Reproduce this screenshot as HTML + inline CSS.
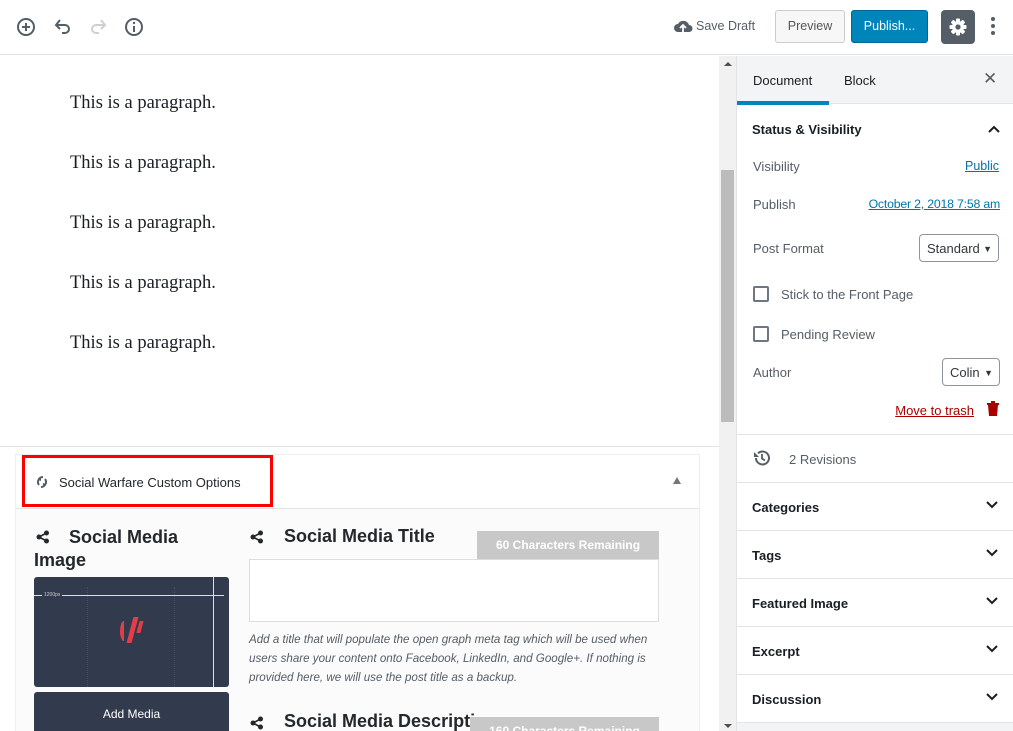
<!DOCTYPE html>
<html style="overflow:hidden;width:1013px;height:731px"><head><meta charset="utf-8"><style>
*{box-sizing:border-box;margin:0;padding:0}
body{width:1013px;height:731px;overflow:hidden;background:#fff;font-family:"Liberation Sans",sans-serif;color:#191e23;position:relative;font-size:13px}
.a{position:absolute}
.p{font-family:"Liberation Serif",serif;font-size:18.5px;color:#191e23;left:70px}
.sb{left:737px;width:276px}
.row{position:absolute;left:737px;width:276px;border-top:1px solid #e2e4e7;height:48px;font-size:13px;font-weight:bold;padding:17px 15px}
.chev{position:absolute;right:14px;top:17px}
.lbl{color:#555d66;font-size:13px}
a{color:#0073aa;text-decoration:underline}
.sel{position:absolute;border:1px solid #8d96a0;border-radius:4px;height:28px;font-size:13px;color:#32373c;padding:6px 7px}
.cb{position:absolute;width:16px;height:16px;border:2px solid #6c7781;border-radius:2px;left:753px}
</style></head><body>
<div class="a" style="left:0;top:0;width:1013px;height:55px;border-bottom:1px solid #e2e4e7"></div>
<svg class="a" style="left:16px;top:17px" width="20" height="20" viewBox="0 0 20 20"><circle cx="10" cy="10" r="8" fill="none" stroke="#555d66" stroke-width="2"/><path d="M10 6v8M6 10h8" stroke="#555d66" stroke-width="2"/></svg>
<svg class="a" style="left:53px;top:17px" width="20" height="20" viewBox="0 0 20 20"><path d="M4 8h8a4 4 0 0 1 0 8H9" fill="none" stroke="#555d66" stroke-width="2"/><path d="M7 3L3 8l4 4" fill="none" stroke="#555d66" stroke-width="2"/></svg>
<svg class="a" style="left:88px;top:17px" width="20" height="20" viewBox="0 0 20 20"><path d="M16 8H8a4 4 0 0 0 0 8h3" fill="none" stroke="#ccd0d4" stroke-width="2"/><path d="M13 3l4 5-4 4" fill="none" stroke="#ccd0d4" stroke-width="2"/></svg>
<svg class="a" style="left:124px;top:17px" width="20" height="20" viewBox="0 0 20 20"><circle cx="10" cy="10" r="8" fill="none" stroke="#555d66" stroke-width="2"/><path d="M10 9v6" stroke="#555d66" stroke-width="2"/><circle cx="10" cy="6" r="1.2" fill="#555d66"/></svg>
<svg class="a" style="left:673px;top:18px" width="20" height="16" viewBox="0 0 20 16"><path d="M5 14a4 4 0 0 1 0-8 6 6 0 0 1 11 1 3.5 3.5 0 0 1 0 7z" fill="#555d66"/><path d="M10 14V8M7 10l3-3 3 3" stroke="#fff" stroke-width="1.8" fill="none"/></svg>
<div class="a" style="left:696px;top:19px;color:#555d66;font-size:12.5px">Save Draft</div>
<div class="a" style="left:775px;top:10px;width:70px;height:33px;border:1px solid #ccc;border-radius:3px;background:#f7f7f7;color:#555;font-size:12.5px;text-align:center;line-height:31px">Preview</div>
<div class="a" style="left:851px;top:10px;width:77px;height:33px;border:1px solid #006799;border-radius:3px;background:#0085ba;color:#fff;font-size:12.5px;text-align:center;line-height:31px">Publish...</div>
<div class="a" style="left:941px;top:10px;width:34px;height:34px;border-radius:4px;background:#555d66"></div>
<svg class="a" style="left:948px;top:17px" width="20" height="20" viewBox="0 0 20 20"><g fill="#fff"><circle cx="10" cy="10" r="6"/><rect x="8" y="1.5" width="4" height="17" rx="1"/><rect x="8" y="1.5" width="4" height="17" rx="1" transform="rotate(45 10 10)"/><rect x="8" y="1.5" width="4" height="17" rx="1" transform="rotate(90 10 10)"/><rect x="8" y="1.5" width="4" height="17" rx="1" transform="rotate(135 10 10)"/></g><circle cx="10" cy="10" r="2.6" fill="#555d66"/></svg>
<div class="a" style="left:991px;top:17px;width:4px;height:4px;border-radius:2px;background:#555d66;box-shadow:0 7px 0 #555d66,0 14px 0 #555d66"></div>

<div class="a p" style="top:93px">This is a paragraph.</div>
<div class="a p" style="top:153px">This is a paragraph.</div>
<div class="a p" style="top:213px">This is a paragraph.</div>
<div class="a p" style="top:273px">This is a paragraph.</div>
<div class="a p" style="top:333px">This is a paragraph.</div>

<div class="a" style="left:719px;top:56px;width:18px;height:675px;background:#f1f1f1"></div>
<div class="a" style="left:721px;top:170px;width:13px;height:252px;background:#bcbcbc"></div>
<div class="a" style="left:724px;top:62px;border:4px solid transparent;border-bottom:4px solid #505050;border-top:0"></div>
<div class="a" style="left:724px;top:724px;border:4px solid transparent;border-top:4px solid #505050;border-bottom:0"></div>

<div class="a" style="left:0;top:446px;width:719px;height:285px;border-top:1px solid #e2e4e7;overflow:hidden">
<div class="a" style="left:15px;top:7px;width:685px;height:300px;background:#fbfbfb;border:1px solid #eee"></div>
<div class="a" style="left:16px;top:8px;width:683px;height:54px;background:#fff;border-bottom:1px solid #e2e4e7"></div>
<div class="a" style="left:22px;top:8px;width:251px;height:52px;border:3px solid #f00"></div>
<svg class="a" style="left:35px;top:28px" width="14" height="14" viewBox="0 0 14 14"><path d="M8 2A5 5 0 0 0 4 10M6 12a5 5 0 0 0 4-8" fill="none" stroke="#555d66" stroke-width="2"/><path d="M3 5l3-3v4zM11 9l-3 3V8z" fill="#555d66"/></svg>
<div class="a" style="left:59px;top:28px;font-size:13px;color:#23282d">Social Warfare Custom Options</div>
<div class="a" style="left:673px;top:30px;border:4px solid transparent;border-bottom:7px solid #72777c;border-top:0"></div>

<svg class="a" style="left:36px;top:83px" width="14" height="14" viewBox="0 0 14 14"><g fill="#23282d"><circle cx="10.5" cy="3" r="2.5"/><circle cx="3" cy="7" r="2.5"/><circle cx="10.5" cy="11" r="2.5"/></g><path d="M10.5 3L3 7l7.5 4" stroke="#23282d" stroke-width="1.6" fill="none"/></svg>
<div class="a" style="left:34px;top:79px;width:190px;font-size:18px;font-weight:bold;color:#23282d;line-height:23px;text-indent:35px">Social Media Image</div>
<div class="a" style="left:34px;top:130px;width:195px;height:110px;background:#323a4e;border-radius:3px;overflow:hidden">
 <div class="a" style="left:0;top:18px;width:190px;height:1px;background:#ddd"></div>
 <div class="a" style="left:179px;top:0;width:1px;height:110px;background:#ddd"></div>
 <div class="a" style="left:53px;top:10px;width:88px;height:100px;border-left:1px dotted #454d60;border-right:1px dotted #454d60"></div>
 <div class="a" style="left:8px;top:15px;font-size:5px;color:#ccc;background:#323a4e;padding:0 2px">1200px</div>
 <div class="a" style="left:86px;top:44px;width:8px;height:20px;border-left:4px solid #e33d47;border-radius:50% 0 0 50%"></div>
 <div class="a" style="left:96px;top:40px;width:5px;height:26px;background:#e33d47;transform:skewX(-15deg)"></div>
 <div class="a" style="left:104px;top:44px;width:4px;height:12px;background:#e33d47;transform:skewX(-15deg)"></div>
</div>
<div class="a" style="left:34px;top:245px;width:195px;height:45px;background:#323a4e;border-radius:3px;color:#fff;font-size:12px;text-align:center;padding-top:15px">Add Media</div>

<svg class="a" style="left:250px;top:83px" width="14" height="14" viewBox="0 0 14 14"><g fill="#23282d"><circle cx="10.5" cy="3" r="2.5"/><circle cx="3" cy="7" r="2.5"/><circle cx="10.5" cy="11" r="2.5"/></g><path d="M10.5 3L3 7l7.5 4" stroke="#23282d" stroke-width="1.6" fill="none"/></svg>
<div class="a" style="left:284px;top:79px;font-size:18px;font-weight:bold;color:#23282d">Social Media Title</div>
<div class="a" style="left:477px;top:84px;width:182px;height:28px;background:#c8c8c8;color:#fff;font-weight:bold;font-size:12px;text-align:center;padding-top:7px">60 Characters Remaining</div>
<div class="a" style="left:249px;top:112px;width:410px;height:63px;background:#fff;border:1px solid #ddd"></div>
<div class="a" style="left:249px;top:183px;width:415px;font-size:11.6px;font-style:italic;color:#555d66;line-height:19px">Add a title that will populate the open graph meta tag which will be used when users share your content onto Facebook, LinkedIn, and Google+. If nothing is provided here, we will use the post title as a backup.</div>
<svg class="a" style="left:250px;top:269px" width="14" height="14" viewBox="0 0 14 14"><g fill="#23282d"><circle cx="10.5" cy="3" r="2.5"/><circle cx="3" cy="7" r="2.5"/><circle cx="10.5" cy="11" r="2.5"/></g><path d="M10.5 3L3 7l7.5 4" stroke="#23282d" stroke-width="1.6" fill="none"/></svg>
<div class="a" style="left:284px;top:264px;width:190px;overflow:hidden;white-space:nowrap;font-size:18px;font-weight:bold;color:#23282d">Social Media Description</div>
<div class="a" style="left:470px;top:270px;width:189px;height:28px;background:#c8c8c8;color:#fff;font-weight:bold;font-size:12px;text-align:center;padding-top:7px">160 Characters Remaining</div>
</div>

<div class="a" style="left:736px;top:56px;width:1px;height:675px;background:#e2e4e7"></div>
<div class="a sb" style="top:56px;height:48px;background:#f3f4f5;border-bottom:1px solid #e2e4e7"></div>
<div class="a" style="left:737px;top:101px;width:92px;height:4px;background:#0085ba"></div>
<div class="a" style="left:753px;top:73px;font-size:13px">Document</div>
<div class="a" style="left:844px;top:73px;font-size:13px">Block</div>
<div class="a" style="left:983px;top:69px;font-size:17px;color:#555d66">✕</div>

<div class="a" style="left:752px;top:122px;font-size:13px;font-weight:bold">Status &amp; Visibility</div>
<svg class="a" style="left:987px;top:124px" width="14" height="10" viewBox="0 0 14 10"><path d="M2 8l5-5 5 5" fill="none" stroke="#191e23" stroke-width="2"/></svg>
<div class="a lbl" style="left:753px;top:159px">Visibility</div>
<div class="a" style="left:965px;top:159px;font-size:12.5px"><a>Public</a></div>
<div class="a lbl" style="left:753px;top:197px">Publish</div>
<div class="a" style="left:860px;top:197px;font-size:12.3px;width:140px;text-align:right;letter-spacing:-0.2px"><a>October 2, 2018 7:58 am</a></div>
<div class="a lbl" style="left:753px;top:241px">Post Format</div>
<div class="sel" style="left:919px;top:234px;width:80px">Standard <span style="font-size:9px;position:absolute;right:6px;top:9px">▼</span></div>
<div class="cb" style="top:286px"></div>
<div class="a lbl" style="left:781px;top:287px">Stick to the Front Page</div>
<div class="cb" style="top:326px"></div>
<div class="a lbl" style="left:781px;top:327px">Pending Review</div>
<div class="a lbl" style="left:753px;top:365px">Author</div>
<div class="sel" style="left:942px;top:358px;width:58px">Colin <span style="font-size:9px;position:absolute;right:6px;top:9px">▼</span></div>
<div class="a" style="left:894px;top:403px;width:80px;text-align:right"><a style="color:#a00">Move to trash</a></div>
<svg class="a" style="left:986px;top:400px" width="14" height="16" viewBox="0 0 14 16"><path d="M1 3h12v2H1zM5 1h4v2H5zM2 5h10l-1 11H3z" fill="#a00"/></svg>

<div class="row" style="top:434px;font-weight:normal;color:#555d66;padding-left:52px">2 Revisions</div>
<svg class="a" style="left:753px;top:449px" width="18" height="18" viewBox="0 0 18 18"><path d="M3 9a6.5 6.5 0 1 0 2-4.7" fill="none" stroke="#555d66" stroke-width="2"/><path d="M1 3v5h5z" fill="#555d66"/><path d="M9 5v4.5l3 2" fill="none" stroke="#555d66" stroke-width="1.8"/></svg>
<div class="row" style="top:482px">Categories<svg class="chev" width="14" height="10" viewBox="0 0 14 10"><path d="M2 2l5 5 5-5" fill="none" stroke="#191e23" stroke-width="2"/></svg></div>
<div class="row" style="top:530px">Tags<svg class="chev" width="14" height="10" viewBox="0 0 14 10"><path d="M2 2l5 5 5-5" fill="none" stroke="#191e23" stroke-width="2"/></svg></div>
<div class="row" style="top:578px">Featured Image<svg class="chev" width="14" height="10" viewBox="0 0 14 10"><path d="M2 2l5 5 5-5" fill="none" stroke="#191e23" stroke-width="2"/></svg></div>
<div class="row" style="top:626px">Excerpt<svg class="chev" width="14" height="10" viewBox="0 0 14 10"><path d="M2 2l5 5 5-5" fill="none" stroke="#191e23" stroke-width="2"/></svg></div>
<div class="row" style="top:674px">Discussion<svg class="chev" width="14" height="10" viewBox="0 0 14 10"><path d="M2 2l5 5 5-5" fill="none" stroke="#191e23" stroke-width="2"/></svg></div>
<div class="a sb" style="top:722px;height:9px;background:#f3f4f5;border-top:1px solid #e2e4e7"></div>
</body></html>
